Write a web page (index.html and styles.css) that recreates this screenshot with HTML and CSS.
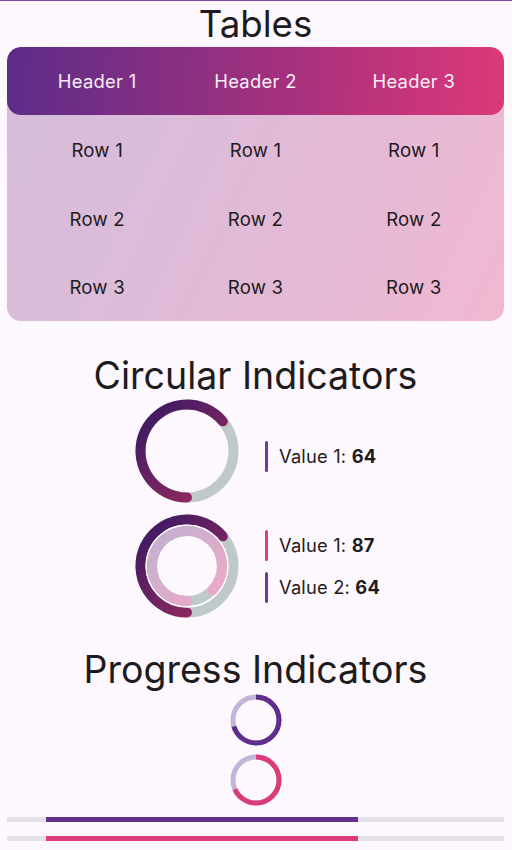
FILE: index.html
```html
<!DOCTYPE html>
<html>
<head>
<meta charset="utf-8">
<link rel="stylesheet" href="styles.css">
</head>
<body>
<div class="page">
  <h1 class="title title-top">Tables</h1>
  <div class="table">
    <div class="thead">
      <div class="cell">Header 1</div>
      <div class="cell">Header 2</div>
      <div class="cell">Header 3</div>
    </div>
    <div class="tbody">
      <div class="trow"><div class="cell">Row 1</div><div class="cell">Row 1</div><div class="cell">Row 1</div></div>
      <div class="trow"><div class="cell">Row 2</div><div class="cell">Row 2</div><div class="cell">Row 2</div></div>
      <div class="trow"><div class="cell">Row 3</div><div class="cell">Row 3</div><div class="cell">Row 3</div></div>
    </div>
  </div>

  <h2 class="title title-circ">Circular Indicators</h2>

  <div class="chart-row">
    <svg class="donut" width="104" height="104" viewBox="0 0 104 104">
      <defs>
        <linearGradient id="g1" gradientUnits="userSpaceOnUse" x1="10" y1="10" x2="94" y2="94">
          <stop offset="0" stop-color="#3c1963"/>
          <stop offset="1" stop-color="#a02c5f"/>
        </linearGradient>
      </defs>
      <circle cx="52" cy="52" r="46.5" fill="none" stroke="#bfc9cc" stroke-width="10"/>
      <path d="M52 98.5 A46.5 46.5 0 1 1 87.83 22.36" fill="none" stroke="url(#g1)" stroke-width="10" stroke-linecap="round"/>
    </svg>
    <div class="legend legend-single">
      <div class="legend-item"><span class="bar bar-purple"></span><span class="ltext">Value 1: <b>64</b></span></div>
    </div>
  </div>

  <div class="chart-row chart-row-2">
    <svg class="donut" width="104" height="104" viewBox="0 0 104 104">
      <defs>
        <linearGradient id="g2" gradientUnits="userSpaceOnUse" x1="10" y1="10" x2="94" y2="94">
          <stop offset="0" stop-color="#3c1963"/>
          <stop offset="1" stop-color="#a02c5f"/>
        </linearGradient>
        <linearGradient id="g3" gradientUnits="userSpaceOnUse" x1="17" y1="17" x2="87" y2="87">
          <stop offset="0" stop-color="#c1b0d2"/>
          <stop offset="1" stop-color="#f0a9c6"/>
        </linearGradient>
      </defs>
      <circle cx="52" cy="52" r="46.5" fill="none" stroke="#bfc9cc" stroke-width="10"/>
      <path d="M52 98.5 A46.5 46.5 0 1 1 87.83 22.36" fill="none" stroke="url(#g2)" stroke-width="10" stroke-linecap="round"/>
      <circle cx="52" cy="52" r="40.8" fill="none" stroke="#ffffff" stroke-width="1.6"/>
      <circle cx="52" cy="52" r="35" fill="none" stroke="#bfc9cc" stroke-width="10"/>
      <path d="M52 87 A35 35 0 1 1 77.52 75.96" fill="none" stroke="url(#g3)" stroke-width="10" stroke-linecap="round"/>
    </svg>
    <div class="legend">
      <div class="legend-item"><span class="bar bar-pink"></span><span class="ltext">Value 1: <b>87</b></span></div>
      <div class="legend-item"><span class="bar bar-purple"></span><span class="ltext">Value 2: <b>64</b></span></div>
    </div>
  </div>

  <h2 class="title title-prog">Progress Indicators</h2>

  <div class="rings">
    <svg width="52" height="52" viewBox="0 0 52 52">
      <circle cx="26" cy="26" r="23" fill="none" stroke="#c4b4d9" stroke-width="5"/>
      <circle cx="26" cy="26" r="23" fill="none" stroke="#5f2d8c" stroke-width="5" stroke-dasharray="101.2 200" transform="rotate(-90 26 26)"/>
    </svg>
    <svg width="52" height="52" viewBox="0 0 52 52">
      <circle cx="26" cy="26" r="23" fill="none" stroke="#c4b4d9" stroke-width="5"/>
      <circle cx="26" cy="26" r="23" fill="none" stroke="#db3a7b" stroke-width="5" stroke-dasharray="98.3 200" transform="rotate(-90 26 26)"/>
    </svg>
  </div>

  <div class="lines">
    <div class="track"><div class="fill fill-purple"></div></div>
    <div class="track"><div class="fill fill-pink"></div></div>
  </div>
</div>
</body>
</html>
```

FILE: styles.css
```css
html, body {
  margin: 0;
  padding: 0;
}
body {
  background: #fdf8fd;
  font-family: "Inter", "Roboto", "Liberation Sans", sans-serif;
  color: #1d1b20;
  border-top: 1px solid #7b4ca2;
  width: 512px;
  height: 849px;
  overflow: hidden;
}
.page {
  display: flex;
  flex-direction: column;
  padding: 0 8px 0 7px;
}
.title {
  margin: 0;
  font-weight: 400;
  text-align: center;
  color: #1d1b20;
}
.title-top {
  font-size: 36.7px;
  line-height: 46px;
  height: 46px;
}
.title-circ {
  font-size: 37.5px;
  line-height: 44px;
  margin-top: 33px;
}
.title-prog {
  font-size: 37.5px;
  line-height: 44px;
  margin-top: 30px;
}
.table {
  border-radius: 14px;
  overflow: hidden;
  background: linear-gradient(115deg, #d3bdd9 0%, #dcbcd9 35%, #e6b9d5 70%, #f1b8d1 100%);
}
.thead {
  display: grid;
  grid-template-columns: repeat(3, 1fr);
  padding: 0 11px;
  height: 68px;
  align-items: center;
  border-radius: 14px;
  background: linear-gradient(92deg, #5c2c89 0%, #8a2f82 35%, #b5327b 68%, #dc3979 100%);
  color: #f6eef6;
  font-size: 18.4px;
  letter-spacing: 0.3px;
}
.tbody {
  display: flex;
  flex-direction: column;
  padding: 0 11px;
}
.trow {
  display: grid;
  grid-template-columns: repeat(3, 1fr);
  height: 68.7px;
  align-items: center;
  font-size: 18.6px;
  letter-spacing: 0.2px;
  padding-top: 1px;
  box-sizing: border-box;
}
.cell {
  text-align: center;
}
.chart-row {
  display: flex;
  justify-content: center;
  align-items: center;
  gap: 26px;
  margin-top: 1px;
}
.chart-row-2 {
  margin-top: 11px;
}
.donut {
  display: block;
}
.legend {
  display: flex;
  flex-direction: column;
  gap: 12px;
  width: 112px;
}
.legend-single {
  padding-top: 10px;
}
.legend-item {
  display: flex;
  align-items: center;
  gap: 11px;
  height: 30px;
}
.bar {
  width: 3.5px;
  height: 31px;
  border-radius: 2px;
  flex: none;
}
.bar-purple { background: #6a3a9d; }
.bar-pink { background: #dc3b7c; }
.ltext {
  font-size: 18.3px;
  white-space: nowrap;
  letter-spacing: 0.2px;
}
.ltext b {
  font-weight: 700;
}
.rings {
  display: flex;
  flex-direction: column;
  align-items: center;
  gap: 8px;
  margin-top: 2px;
}
.rings svg {
  display: block;
}
.lines {
  display: flex;
  flex-direction: column;
  gap: 14px;
  margin-top: 11px;
}
.track {
  height: 5px;
  background: #e5e1ea;
  position: relative;
  width: 497px;
}
.fill {
  position: absolute;
  top: 0;
  bottom: 0;
  left: 39px;
  width: 312px;
}
.fill-purple { background: #62318b; }
.fill-pink { background: #db3a7b; }
```
